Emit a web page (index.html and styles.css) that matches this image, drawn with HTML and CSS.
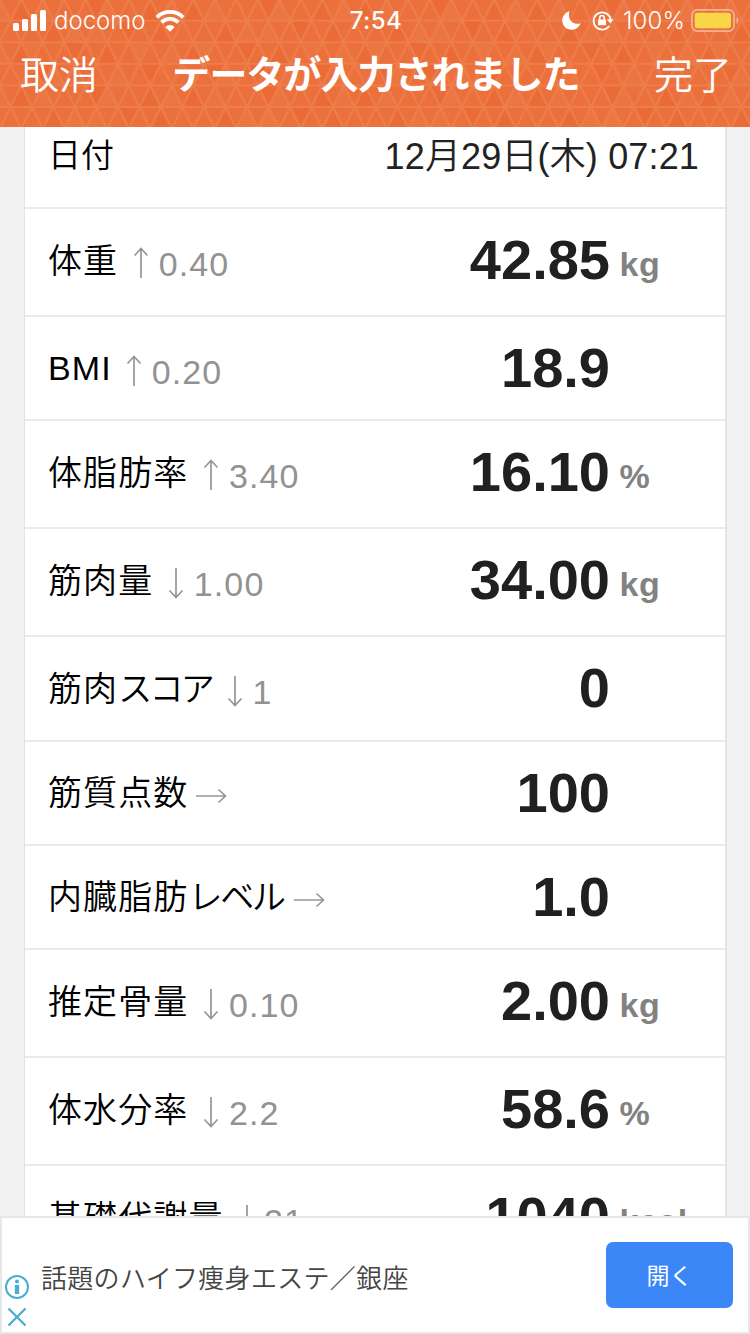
FILE: index.html
```html
<!DOCTYPE html>
<html lang="ja">
<head>
<meta charset="utf-8">
<title>データが入力されました</title>
<link rel="stylesheet" href="styles.css">
</head>
<body>
<svg class="defs" width="0" height="0" aria-hidden="true">
  <symbol id="up" viewBox="0 0 34 34"><path d="M17 32V3M10.500 9.500 17 2.500l6.500 7"/></symbol>
  <symbol id="down" viewBox="0 0 34 34"><path d="M17 2v29M10.500 24.500 17 31.500l6.500-7"/></symbol>
  <symbol id="right" viewBox="0 0 34 34"><path d="M2 17h29M24.500 10.500 31.500 17l-7 6.500"/></symbol>
</svg>
<div class="screen">
  <header class="header">
    <svg class="pattern" width="750" height="127" aria-hidden="true">
      <defs>
        <pattern id="shade" width="172" height="86.400" patternUnits="userSpaceOnUse" patternTransform="translate(10.500 -1)">
          <path fill="#ea6b35" d="M10.750 0 0 21.600h21.500zM43 21.600 32.250 43.200h21.500zM75.250 0h21.500L86 21.600zM107.500 21.600h21.500l-10.750 21.600zM53.750 43.200h21.500L64.500 64.800zM21.500 64.800h21.500L32.250 86.400zM96.750 43.200 86 64.800h21.500zM139.750 0 129 21.600h21.500zM150.500 21.600l10.750 21.600h-21.500zM129 64.800h21.500l-10.750 21.600zM0 64.800l10.750-21.600 10.750 21.600zM75.250 86.400 64.500 64.800h21.500z"/>
          <path fill="#ec7641" d="M21.500 21.600h21.500L32.250 0zM64.500 21.600 53.750 43.200h21.500zM96.750 0 86 21.600h21.500zM10.750 43.200h21.500L21.500 64.800zM118.250 43.200h21.500L129 64.800zM43 64.800l10.750 21.600H32.250zM150.500 64.800l10.750-21.600L172 64.800zM107.500 64.800l10.750 21.600h-21.500zM161.250 0 150.500 21.600H172zM75.250 43.200h21.500L86 21.600z"/>
        </pattern>
        <pattern id="mesh" width="21.500" height="43.200" patternUnits="userSpaceOnUse" patternTransform="translate(10.500 -1)">
          <path d="M10.750 0 0 21.600 10.750 43.200 21.500 21.600zM0 21.600h21.500M0 0h21.500M0 43.200h21.500" fill="none" stroke="#ed7e4c" stroke-width="2"/>
        </pattern>
      </defs>
      <rect width="750" height="127" fill="url(#shade)"/>
      <rect width="750" height="127" fill="url(#mesh)"/>
    </svg>
    <div class="status">
      <div class="status-left">
        <svg width="33" height="22" viewBox="0 0 33 22" fill="#fff"><rect x="0" y="13" width="6" height="8" rx="1.500"/><rect x="9" y="9" width="6" height="12" rx="1.500"/><rect x="18" y="4" width="6" height="17" rx="1.500"/><rect x="27" y="0" width="6" height="21" rx="1.500"/></svg>
        <span class="carrier">docomo</span>
        <svg class="wifi" width="30" height="22" viewBox="0 0 30 22" fill="none" stroke="#fff" stroke-width="3.700"><path d="M1.800 7.400a18.700 18.700 0 0 1 26.400 0"/><path d="M6.600 12.400a11.900 11.900 0 0 1 16.800 0"/><path fill="#fff" stroke="none" d="M10.300 17a6.700 6.700 0 0 1 9.400 0L15 21.800z"/></svg>
      </div>
      <span class="clock">7:54</span>
      <div class="status-right">
        <svg width="19" height="19" viewBox="0 0 19 19"><path fill="#fff" d="M7.600.3C4.800 7.800 10.500 14.800 18.700 12.200 17 16.300 13.700 18.700 9.600 18.700 4.500 18.700.3 14.700.3 9.400.3 5.200 3.400 1.500 7.600.3z"/></svg>
        <svg class="lock" width="22" height="20" viewBox="0 0 22 20"><path fill="none" stroke="#fff" stroke-width="1.800" d="M17.600 5.600A8.600 8.600 0 1 0 17.200 15M17.500 5.300a8.600 8.600 0 0 1 1 3.700"/><path fill="#fff" d="M14.800 8.300h6.700L18.300 12.600zM6 8.600h8v5.600H6z"/><path fill="none" stroke="#fff" stroke-width="1.500" d="M7.700 9V6.900a2.300 2.300 0 0 1 4.600 0V9"/></svg>
        <span class="percent">100%</span>
        <svg class="battery" width="48" height="23" viewBox="0 0 48 23"><rect x=".9" y=".9" width="42.200" height="21.200" rx="5.500" fill="none" stroke="#f5b394" stroke-width="1.700"/><rect x="3.700" y="3.700" width="36.300" height="15.600" rx="2.800" fill="#f8d648"/><path d="M45.500 8c2.500.8 2.500 6.200 0 7z" fill="#f5b394"/></svg>
      </div>
    </div>
    <nav class="nav">
      <span class="nav-btn">取消</span>
      <h1 class="title">データが入力されました</h1>
      <span class="nav-btn">完了</span>
    </nav>
  </header>
  <main class="card">
    <div class="row date"><span class="date-label">日付</span><span class="date-value">12<span class="thin">月</span>29<span class="thin">日</span>(<span class="thin">木</span>) 07:21</span></div>
    <div class="row tall"><span class="label">体重</span><svg class="arrow"><use href="#up"/></svg><span class="trend">0.40</span><span class="value">42.85</span><span class="unit">kg</span></div>
    <div class="row"><span class="label latin">BMI</span><svg class="arrow near"><use href="#up"/></svg><span class="trend">0.20</span><span class="value">18.9</span><span class="unit"></span></div>
    <div class="row tall"><span class="label">体脂肪率</span><svg class="arrow"><use href="#up"/></svg><span class="trend">3.40</span><span class="value">16.10</span><span class="unit">%</span></div>
    <div class="row tall"><span class="label">筋肉量</span><svg class="arrow"><use href="#down"/></svg><span class="trend">1.00</span><span class="value">34.00</span><span class="unit">kg</span></div>
    <div class="row"><span class="label">筋肉<span class="kana">スコア</span></span><svg class="arrow"><use href="#down"/></svg><span class="trend">1</span><span class="value">0</span><span class="unit"></span></div>
    <div class="row"><span class="label">筋質点数</span><svg class="arrow"><use href="#right"/></svg><span class="value">100</span><span class="unit"></span></div>
    <div class="row"><span class="label">内臓脂肪<span class="kana wide">レベル</span></span><svg class="arrow far"><use href="#right"/></svg><span class="value">1.0</span><span class="unit"></span></div>
    <div class="row tall"><span class="label">推定骨量</span><svg class="arrow"><use href="#down"/></svg><span class="trend">0.10</span><span class="value">2.00</span><span class="unit">kg</span></div>
    <div class="row tall"><span class="label">体水分率</span><svg class="arrow"><use href="#down"/></svg><span class="trend">2.2</span><span class="value">58.6</span><span class="unit">%</span></div>
    <div class="row tall"><span class="label">基礎代謝量</span><svg class="arrow"><use href="#down"/></svg><span class="trend">21</span><span class="value">1040</span><span class="unit">kcal</span></div>
  </main>
  <footer class="ad">
    <div class="ad-marks">
      <svg width="26" height="26" viewBox="0 0 26 26"><circle cx="13" cy="13" r="11" fill="none" stroke="#4aaed0" stroke-width="2"/><circle cx="13" cy="7.500" r="2" fill="#4aaed0"/><path fill="#4aaed0" d="M10.800 11h4.400v9h-4.400z"/></svg>
      <svg width="20" height="20" viewBox="0 0 20 20"><path d="m1.500 1.500 17 17m0-17-17 17" stroke="#4aaed0" stroke-width="2.300"/></svg>
    </div>
    <span class="ad-text">話題のハイフ痩身エステ／銀座</span>
    <span class="ad-button">開く</span>
  </footer>
</div>
</body>
</html>
```
FILE: styles.css
```css
* { box-sizing: border-box; }
body { margin: 0; font-family: "Liberation Sans", "Noto Sans CJK JP", sans-serif; }
.defs { position: absolute; }
.screen { width: 750px; height: 1334px; overflow: hidden; display: flex; flex-direction: column; background: #f1f1f1; }

.header { position: relative; flex: none; height: 127px; background: #eb703b; color: #fff; }
.pattern { position: absolute; inset: 0; }
.status { position: relative; height: 40px; display: grid; grid-template-columns: 1fr auto 1fr; align-items: center; padding: 1px 11px 0 13px; font: 400 24px/30px Inter, sans-serif; }
.status-left, .status-right { display: flex; align-items: center; }
.status-right { justify-content: flex-end; }
.carrier { margin-left: 8px; font-weight: 300; letter-spacing: 0; }
.wifi { margin-left: 9px; }
.clock { font-weight: 500; letter-spacing: 0.4px; }
.lock { margin-left: 11px; }
.percent { margin-left: 9px; font-weight: 300; letter-spacing: 0.1px; }
.battery { margin-left: 6px; }
.nav { position: relative; display: flex; justify-content: space-between; align-items: center; height: 64px; padding: 0 18px 0 20px; font-family: "Noto Sans CJK JP", sans-serif; }
.nav-btn { font-size: 39px; font-weight: 350; line-height: 50px; white-space: nowrap; }
.title { margin: 0; font-size: 38px; line-height: 50px; font-weight: 700; letter-spacing: -1px; white-space: nowrap; }

.card { flex: none; height: 1089px; overflow: hidden; width: 703px; margin-left: 24px; background: #fff; border: solid #e2e3e4; border-width: 0 2px 0 1px; }
.row { display: flex; align-items: flex-start; height: 104.2px; padding-left: 23px; border-top: 2px solid #eaeaea; }
.row.tall { height: 108.1px; }
.row.date { height: 80px; border-top: 0; justify-content: space-between; padding-right: 26px; }
.date-label { font-size: 33px; line-height: 40px; padding-top: 9px; font-weight: 350; }
.date-value { font-size: 36px; line-height: 40px; letter-spacing: 0.15px; padding-top: 10px; color: #222; }
.thin { font-weight: 350; }
.label { font-size: 34px; line-height: 40px; letter-spacing: 1.1px; padding-top: 31.5px; font-weight: 350; color: #000; white-space: nowrap; }
.latin { padding-top: 31px; }
.kana { letter-spacing: -2.7px; }
.kana.wide { letter-spacing: -2.2px; }
.arrow { width: 34px; height: 34px; margin: 37px 0 0 6px; fill: none; stroke: #969696; stroke-width: 1.7; }
.arrow.near { margin-left: 5.5px; }
.arrow.far { margin-left: 8px; }
.trend { font-size: 34px; line-height: 40px; letter-spacing: 1.1px; padding-top: 35px; padding-left: 0.5px; color: #929292; }
.value { margin-left: auto; font-size: 56px; line-height: 60px; font-weight: 700; letter-spacing: 0; padding-top: 21px; color: #202020; }
.unit { width: 115px; padding: 35px 0 0 9.5px; font-size: 34px; line-height: 40px; font-weight: 700; letter-spacing: 0.5px; color: #828282; }

.ad { flex: none; height: 118px; display: flex; align-items: center; background: #fff; border: 2px solid #e6e7e9; padding-right: 15px; }
.ad-marks { align-self: flex-end; width: 30px; display: flex; flex-direction: column; align-items: center; gap: 7px; padding-bottom: 5px; }
.ad-text { margin-left: 9px; padding-top: 3px; font-size: 26px; line-height: 36px; font-weight: 350; letter-spacing: 0.3px; color: #444; font-family: "Noto Sans CJK JP", sans-serif; }
.ad-button { margin-left: auto; width: 127px; height: 66px; border-radius: 7px; background: #3b87f8; color: #fff; text-align: center; font: 400 23px/64px "Noto Sans CJK JP", sans-serif; }
```
